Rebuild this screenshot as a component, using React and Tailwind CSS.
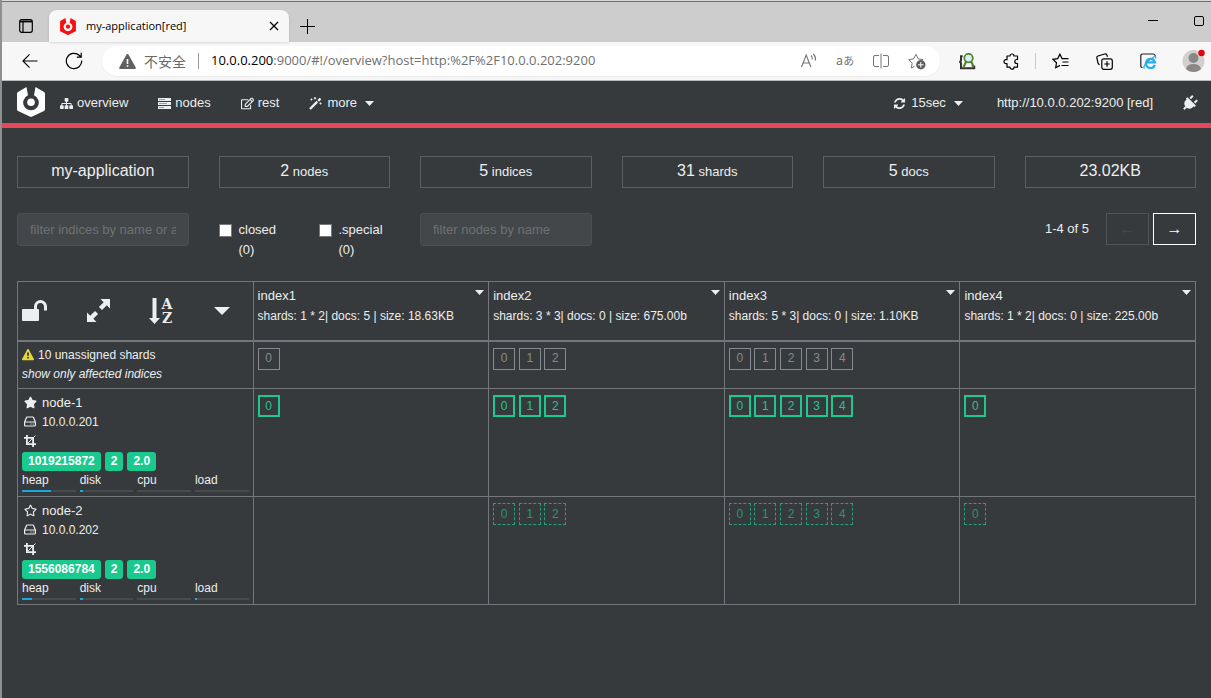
import React from "react";
import { FaPlug, FaStar, FaRegStar, FaRegEdit } from "react-icons/fa";

const INDICES = [
  { name: "index1", info: "shards: 1 * 2| docs: 5 | size: 18.63KB", shards: [["0"], ["0"], []] },
  { name: "index2", info: "shards: 3 * 3| docs: 0 | size: 675.00b", shards: [["0", "1", "2"], ["0", "1", "2"], ["0", "1", "2"]] },
  { name: "index3", info: "shards: 5 * 3| docs: 0 | size: 1.10KB", shards: [["0", "1", "2", "3", "4"], ["0", "1", "2", "3", "4"], ["0", "1", "2", "3", "4"]] },
  { name: "index4", info: "shards: 1 * 2| docs: 0 | size: 225.00b", shards: [[], ["0"], ["0"]] },
];

const NODES = [
  { name: "node-1", ip: "10.0.0.201", tags: ["1019215872", "2", "2.0"], master: true, usage: { heap: 54, disk: 7, cpu: 0, load: 0 } },
  { name: "node-2", ip: "10.0.0.202", tags: ["1556086784", "2", "2.0"], master: false, usage: { heap: 19, disk: 7, cpu: 0, load: 4 } },
];

const STATS = [
  { value: "my-application" },
  { value: "2", unit: "nodes" },
  { value: "5", unit: "indices" },
  { value: "31", unit: "shards" },
  { value: "5", unit: "docs" },
  { value: "23.02KB" },
];

const SHARD_STYLES = [
  "border border-[#868a8e] text-[#868a8e]",
  "border-2 border-[#1ac98e] text-[#1ac98e]",
  "border border-dashed border-[#25a079] text-[#259672]",
];

function Glyph({ d, className }) {
  return (
    <svg viewBox="0 0 1792 1792" fill="currentColor" className={className} aria-hidden="true">
      <path d={d} />
    </svg>
  );
}

const SITEMAP = "M1792 1248v320q0 40-28 68t-68 28h-320q-40 0-68-28t-28-68v-320q0-40 28-68t68-28h96v-192h-512v192h96q40 0 68 28t28 68v320q0 40-28 68t-68 28h-320q-40 0-68-28t-28-68v-320q0-40 28-68t68-28h96v-192h-512v192h96q40 0 68 28t28 68v320q0 40-28 68t-68 28h-320q-40 0-68-28t-28-68v-320q0-40 28-68t68-28h96v-192q0-52 38-90t90-38h512v-192h-96q-40 0-68-28t-28-68v-320q0-40 28-68t68-28h320q40 0 68 28t28 68v320q0 40-28 68t-68 28h-96v192h512q52 0 90 38t38 90v192h96q40 0 68 28t28 68z";
const REFRESH = "M1639 1056q0 5-1 7-64 268-268 434.500t-478 166.500q-146 0-282.500-55t-243.500-157l-129 129q-19 19-45 19t-45-19-19-45v-448q0-26 19-45t45-19h448q26 0 45 19t19 45-19 45l-137 137q71 66 161 102t187 36q134 0 250-65t186-179q11-17 53-117 8-23 30-23h192q13 0 22.500 9.500t9.500 22.500zm25-800v448q0 26-19 45t-45 19h-448q-26 0-45-19t-19-45 19-45l138-138q-148-137-349-137-134 0-250 65t-186 179q-11 17-53 117-8 23-30 23h-199q-13 0-22.500-9.500t-9.500-22.500v-7q65-268 270-434.500t480-166.500q146 0 284 55.500t245 156.500l130-129q19-19 45-19t45 19 19 45z";
const WARNING = "M1024 1375v-190q0-14-9.500-23.500t-22.500-9.500h-192q-13 0-22.500 9.500t-9.500 23.500v190q0 14 9.500 23.500t22.500 9.500h192q13 0 22.500-9.500t9.500-23.500zm-2-374l18-459q0-12-10-19-13-11-24-11h-220q-11 0-24 11-10 7-10 21l17 457q0 10 10 16.500t24 6.500h185q14 0 23.500-6.500t10.500-16.500zm-14-934l768 1408q35 63-2 126-17 29-46.500 46t-63.500 17h-1536q-34 0-63.500-17t-46.500-46q-37-63-2-126l768-1408q17-31 47-49t65-18 65 18 47 49z";

function Logo({ className }) {
  return (
    <svg viewBox="0 0 28 30" className={className} aria-hidden="true">
      <path fill="currentColor" fillRule="evenodd" d="M9.500 0 11 8.300a7.800 7.800 0 1 0 6 0L18.500 0 27 5a2 2 0 0 1 1 1.700v15.600a2 2 0 0 1-1 1.700l-11.800 5.600a2.500 2.500 0 0 1-2.400 0L1 24a2 2 0 0 1-1-1.700V6.700A2 2 0 0 1 1 5Z" />
      <circle cx="14" cy="15.300" r="3.800" fill="currentColor" />
    </svg>
  );
}

function Caret({ className }) {
  return (
    <svg viewBox="0 0 8 4" preserveAspectRatio="none" fill="currentColor" className={className} aria-hidden="true">
      <path d="M0 0h8L4 4Z" />
    </svg>
  );
}

function ToolButton({ label, wide, children }) {
  return (
    <button type="button" aria-label={label} className={`flex h-8 shrink-0 items-center justify-center ${wide ? "w-11" : "w-9"}`}>
      {children}
    </button>
  );
}

function BrowserChrome() {
  return (
    <header className="font-['Open_Sans','Noto_Sans_CJK_SC',sans-serif] text-black">
      <div className="h-0.5 border-b border-[#6b706f] bg-[#d9dbda]" />
      <div className="flex h-10 items-end bg-[#cdcdcd]">
        <button type="button" aria-label="Tab actions" className="flex h-8 w-[47px] items-center justify-center">
          <svg width="14" height="14" viewBox="0 0 14 14" fill="none" stroke="currentColor" strokeWidth="1.200">
            <rect x=".7" y=".7" width="12.600" height="12.600" rx="2" />
            <path d="M1 2.500h12" strokeWidth="1.800" />
            <path d="M4 3v10" />
          </svg>
        </button>
        <div className="flex h-8 w-60 items-center rounded-t-lg bg-[#f7f7f7] pr-[10px] pl-[11px] shadow-sm">
          <Logo className="h-[17px] w-4 text-[#f80f0f]" />
          <span className="ml-[10px] flex-1 text-[11px] whitespace-nowrap">my-application[red]</span>
          <button type="button" aria-label="Close tab">
            <svg width="10" height="10" viewBox="0 0 10 10" stroke="currentColor" strokeWidth="1.300"><path d="m1 1 8 8M9 1 1 9" /></svg>
          </button>
        </div>
        <button type="button" aria-label="New tab" className="flex h-8 w-9 items-center justify-center">
          <svg width="15" height="15" viewBox="0 0 15 15" stroke="currentColor"><path d="M7.500 0v15M0 7.500h15" /></svg>
        </button>
        <div className="mb-3 ml-auto flex items-center gap-9 pr-[7px]">
          <button type="button" aria-label="Minimize" className="pb-1">
            <svg width="10" height="10" viewBox="0 0 10 10" stroke="currentColor"><path d="M0 4.500h10" /></svg>
          </button>
          <button type="button" aria-label="Maximize" className="pb-1">
            <svg width="10" height="10" viewBox="0 0 10 10" fill="none" stroke="currentColor"><rect x=".5" y=".5" width="9" height="9" rx="1.500" /></svg>
          </button>
        </div>
      </div>
      <div className="flex h-[39px] items-center border-b border-[#b9bcbb] bg-[#f7f7f7] pl-[6px]">
        <ToolButton label="Back" wide>
          <svg width="16" height="16" viewBox="0 0 17 16" fill="none" stroke="currentColor" strokeWidth="1.200"><path d="M16.500 8H1M8 1 1 8l7 7" /></svg>
        </ToolButton>
        <ToolButton label="Reload" wide>
          <svg width="18" height="18" viewBox="0 0 18 18" fill="none" stroke="currentColor" strokeWidth="1.200"><path d="M16.700 8.500A7.700 7.700 0 1 1 14.200 3.300L16 5M16.200.8V5.200H11.800" /></svg>
        </ToolButton>
        <div className="ml-[6px] flex h-[30px] min-w-0 flex-1 items-center rounded-full bg-white pr-[5px] pl-[17px] shadow-xs">
          <svg width="17" height="15" viewBox="0 0 17 15" aria-hidden="true">
            <path fill="#606060" d="M7.400.7a1.200 1.200 0 0 1 2.200 0l7 12.600a1.100 1.100 0 0 1-1 1.700H1.400a1.100 1.100 0 0 1-1-1.700Z" />
            <path stroke="#fff" strokeWidth="1.600" d="M8.500 5v5M8.500 11.200v1.600" />
          </svg>
          <span className="ml-2 font-['Noto_Sans_CJK_SC',sans-serif] text-sm leading-5 whitespace-nowrap text-[#6a6a6a]">不安全</span>
          <span className="mx-3 h-4 w-px bg-[#9a9a9a]" />
          <span className="min-w-0 flex-1 truncate text-[13px] text-[#707070]">
            <span className="text-black">10.0.0.200</span>:9000/#!/overview?host=http:%2F%2F10.0.0.202:9200
          </span>
          <div className="flex items-center text-[#757575]">
            <ToolButton label="Read aloud">
              <svg width="18" height="16" viewBox="0 0 18 16" fill="none" stroke="currentColor" strokeWidth="1.100"><path d="M1.500 14 6.200 2 10.900 14M3.200 10h6M11 2.500q1.500 1.500 1.200 4M13.300 1q2.600 2.500 2.200 6.500" /></svg>
            </ToolButton>
            <ToolButton label="Translate">
              <span className="pb-0.5 font-['Noto_Sans_CJK_JP',sans-serif] text-[13px]">a<span className="text-[11px]">あ</span></span>
            </ToolButton>
            <ToolButton label="Split screen">
              <svg width="16" height="16" viewBox="0 0 16 16" fill="none" stroke="currentColor"><path d="M6 2.500H2Q.5 2.500.5 4v8q0 1.500 1.500 1.500h4M10 2.500h4q1.500 0 1.500 1.500v8q0 1.500-1.500 1.500h-4M8 .5v15" /></svg>
            </ToolButton>
            <ToolButton label="Add to favorites">
              <svg width="18" height="17" viewBox="0 0 18 17" fill="none" stroke="currentColor">
                <path d="M6.500 13.300 3.300 15l.9-4.900L.7 6.600l4.900-.7L8 1.300l2.300 4.600 4.900.7" />
                <circle cx="12.800" cy="11.800" r="4.700" fill="#5c5c5c" stroke="none" />
                <path stroke="#fff" d="M12.800 9v5.600M10 11.800h5.600" />
              </svg>
            </ToolButton>
          </div>
        </div>
        <div className="ml-[5px] flex items-center">
          <ToolButton label="Extension" wide>
            <svg width="17" height="17" viewBox="0 0 16 16" fill="none">
              <path d="M3.500 3H1.900v4.200l-1 1.200 1 1.200v4.700h12.400v-2.500" stroke="#333" strokeWidth="1.900" />
              <path d="M7 7.500 4.200 13.500M11 8q2.300 2 2 5" stroke="#557f2a" strokeWidth="2" />
              <circle cx="9" cy="4.800" r="4" fill="#d3f0fa" stroke="#557f2a" strokeWidth="1.600" />
            </svg>
          </ToolButton>
          <ToolButton label="Extensions" wide>
            <svg width="17" height="17" viewBox="0 0 17 17" fill="none" stroke="currentColor" strokeWidth="1.200" strokeLinejoin="round">
              <path d="M4 3h3a2 2 0 0 1 4 0h3.500v3.500h-.7a2 2 0 0 0 0 4h.7v3.700H11a2 2 0 0 1-4 0H4v-3.500H3a2 2 0 0 1 0-4h1Z" />
            </svg>
          </ToolButton>
          <span className="mx-[2px] h-4 w-px bg-[#c8c8c8]" />
          <ToolButton label="Favorites" wide>
            <svg width="17" height="16" viewBox="0 0 17 16" fill="none" stroke="currentColor" strokeWidth="1.200">
              <path d="M8 12.400 3.700 14.700l.8-4.900L1 6.300l4.700-.7L7.900 1.200 10 5.600h6.500M10.500 9h6M9.500 12.500h7" />
            </svg>
          </ToolButton>
          <ToolButton label="Collections" wide>
            <svg width="17" height="17" viewBox="0 0 17 17" fill="none" stroke="currentColor" strokeWidth="1.200">
              <path d="M3.600 11.700Q2.300 11.200 2 10L.9 5.200Q.5 3.500 2 3L8.700 1q1.600-.4 2.200 1l.6 1.700" />
              <rect x="5.800" y="5.800" width="10.500" height="10.500" rx="2" />
              <path d="M11 8.300v5.400M8.300 11h5.400" />
            </svg>
          </ToolButton>
          <ToolButton label="Internet Explorer mode" wide>
            <svg width="17" height="16" viewBox="0 0 17 16" fill="none">
              <path d="M2.500 14.500Q.8 14.500.8 13V3q0-2 2-2h10.500q1.800 0 2 2" stroke="#222" strokeWidth="1.200" />
              <path d="M14.900 11.800A4.600 4.600 0 1 1 15 9.400H6.500" stroke="#27aee9" strokeWidth="2.300" />
              <path d="M4.500 15.500q-2-1 2-5.500T14.500 3.500q1.700 0 1 2" stroke="#27aee9" strokeWidth="1.300" />
            </svg>
          </ToolButton>
          <button type="button" aria-label="Profile" className="ml-[5px] flex w-9 items-center justify-center">
            <svg width="24" height="24" viewBox="0 0 24 24">
              <circle cx="12.500" cy="12" r="11" fill="#d2d0ce" />
              <circle cx="12.500" cy="9" r="5" fill="#8a8886" />
              <path d="M5 20q1-5 7.500-5t7.500 5q-3 3-7.500 3T5 20Z" fill="#8a8886" />
              <circle cx="20.500" cy="4" r="3.200" fill="#e3000b" />
            </svg>
          </button>
        </div>
      </div>
    </header>
  );
}

function NavBar() {
  return (
    <nav className="flex h-[47px] items-center border-b-[5px] border-[#e64759] px-[15px] text-[13px] whitespace-nowrap">
      <a href="#overview" aria-label="Home"><Logo className="h-[30px] w-7 text-white" /></a>
      <div className="ml-[15px] flex items-center gap-[30px] pt-0.5">
        <a href="#overview" className="flex items-center gap-1">
          <Glyph d={SITEMAP} className="size-[13px]" />overview
        </a>
        <a href="#nodes" className="flex items-center gap-1">
          <svg width="13" height="11" viewBox="0 0 13 11" aria-hidden="true">
            <path fill="currentColor" d="M0 0h13v3H0zM0 4h13v3H0zM0 8h13v3H0z" />
            <path stroke="#9b9ea0" d="M1 1.500h6M1 5.500h8M1 9.500h5" />
          </svg>
          nodes
        </a>
        <a href="#rest" className="flex items-center gap-1">
          <FaRegEdit className="size-[13px]" />rest
        </a>
        <button type="button" className="flex items-center gap-[5px]">
          <svg width="13" height="13" viewBox="0 0 13 13" fill="none" stroke="currentColor" aria-hidden="true">
            <path strokeWidth="2.400" d="M1 12 8.300 4.700" />
            <path strokeWidth="2.400" d="M9.200 3.800 11.500 1.500" />
            <path d="M2.500 1.500v2M1.500 2.500h2M6 0v2.400M4.800 1.200h2.400M11.500 5.500v2M10.500 6.500h2" />
          </svg>
          more
          <Caret className="ml-[3px] h-[5px] w-[9px]" />
        </button>
      </div>
      <div className="ml-auto flex items-center gap-[30px] pt-0.5">
        <button type="button" className="flex items-center gap-[5px]">
          <Glyph d={REFRESH} className="size-[13px]" />
          15sec
          <Caret className="mr-1 ml-[3px] h-[5px] w-[9px]" />
        </button>
        <a href="#connect">http://10.0.0.202:9200 [red]</a>
        <button type="button" aria-label="Disconnect"><FaPlug className="size-[13px] scale-125 rotate-45" /></button>
      </div>
    </nav>
  );
}

function Check({ label }) {
  return (
    <label className="flex w-[100px] shrink-0 gap-[7px]">
      <input type="checkbox" className="mt-1 size-[13px] shrink-0 appearance-none border border-[#767676] bg-white checked:bg-[#1ac98e]" />
      <span className="leading-5">{label}<br />(0)</span>
    </label>
  );
}

function Filters() {
  const field = "h-[33px] w-full min-w-0 rounded-[3px] border border-[#4b4f52] bg-[#434749] px-3 text-[13px] placeholder:text-[#6d7174] outline-none";
  return (
    <form className="mt-[25px] grid grid-cols-6 gap-[30px]" onSubmit={(e) => e.preventDefault()}>
      <input type="text" aria-label="Filter indices" placeholder="filter indices by name or aliases" className={field} />
      <div className="flex pt-[7px]">
        <Check label="closed" />
        <Check label=".special" />
      </div>
      <input type="text" aria-label="Filter nodes" placeholder="filter nodes by name" className={field} />
      <div className="col-span-3 flex h-8 items-center justify-end">
        <span className="mr-[17px] text-[13px]">1-4 of 5</span>
        <button type="button" disabled aria-label="Previous page" className="mr-1 h-8 w-[43px] border border-[#515558] text-base text-[#45494c]">←</button>
        <button type="button" aria-label="Next page" className="h-8 w-[43px] border border-white text-base text-white">→</button>
      </div>
    </form>
  );
}

function TableTools() {
  return (
    <div className="flex items-center justify-between pr-[19px]">
      <button type="button" aria-label="Toggle lock">
        <svg width="25" height="22" viewBox="0 0 25 22" aria-hidden="true">
          <rect y="9" width="17" height="12" rx="1" fill="currentColor" />
          <path d="M13.500 10V6.500a5 5 0 0 1 10 0V10.500" fill="none" stroke="currentColor" strokeWidth="3" />
        </svg>
      </button>
      <button type="button" aria-label="Expand">
        <svg width="23" height="23" viewBox="0 0 23 23" fill="currentColor" aria-hidden="true">
          <path d="M13.500 0H23v9.500l-3.200-3.200-4.800 4.800-3.100-3.100 4.800-4.800ZM0 13.500l3.200 3.200L8 11.900l3.100 3.100-4.800 4.800L9.500 23H0Z" />
        </svg>
      </button>
      <button type="button" aria-label="Sort by name">
        <svg width="25" height="32" viewBox="0 0 25 32" fill="currentColor" aria-hidden="true">
          <path d="M3.500 3h4v20H11l-5.500 6L0 23h3.500Z" />
          <text x="18" y="14" textAnchor="middle" className="font-['DejaVu_Serif',serif] text-sm font-bold">A</text>
          <text x="18" y="28" textAnchor="middle" className="font-['DejaVu_Serif',serif] text-sm font-bold">Z</text>
        </svg>
      </button>
      <button type="button" aria-label="More actions"><Caret className="h-2 w-4" /></button>
    </div>
  );
}

function Shards({ ids, kind }) {
  return ids.map((id) => (
    <React.Fragment key={id}>
      <button type="button" className={`inline-flex size-[22px] items-center justify-center pb-px align-top text-xs ${SHARD_STYLES[kind]}`}>{id}</button>{" "}
    </React.Fragment>
  ));
}

function NodeCell({ node }) {
  const Star = node.master ? FaStar : FaRegStar;
  return (
    <div className="text-xs">
      <div className="flex h-[19px] items-center gap-[5px] pl-0.5 text-[13px]"><Star className="size-[13px]" />{node.name}</div>
      <div className="flex h-[19px] items-center gap-[6px] pl-0.5">
        <svg width="12" height="11" viewBox="0 0 12 11" fill="none" stroke="currentColor" strokeWidth="1.200" aria-hidden="true">
          <path d="M.6 6 2.500 1.500Q2.700 1 3.200 1h5.600q.5 0 .7.500L11.400 6v3q0 1-1 1H1.600q-1 0-1-1ZM.6 6h10.800M6.500 8h1M8.700 8h1" />
        </svg>
        {node.ip}
      </div>
      <div className="flex h-5 items-center pl-0.5">
        <svg width="12" height="12" viewBox="0 0 12 12" fill="none" stroke="currentColor" strokeWidth="1.800" aria-hidden="true">
          <path d="M0 2.900h9.100V12M2.900 0v9.100H12" />
          <path strokeWidth="1" d="M3.500 8.500 11.500.500" />
        </svg>
      </div>
      <div className="flex h-5 items-center gap-1 font-bold text-white">
        {node.tags.map((tag) => (
          <span key={tag} className="rounded-[3px] bg-[#1ac98e] px-[6px] leading-[19px]">{tag}</span>
        ))}
      </div>
      <div className="grid grid-cols-4 gap-1">
        {Object.entries(node.usage).map(([key, value]) => (
          <div key={key}>
            <div className="leading-[19px]">{key}</div>
            <div className="h-0.5 bg-[#484b4d]"><div className="h-full bg-[#1ca8dd]" style={{ width: `${value}%` }} /></div>
          </div>
        ))}
      </div>
    </div>
  );
}

function ClusterTable() {
  const cell = "border border-[#73777b] p-1 text-left align-top font-normal";
  const shardCell = `${cell} pt-[6px]`;
  return (
    <table className="mt-[21px] w-full table-fixed border-collapse">
      <thead>
        <tr className="h-[59px]">
          <th className="border border-b-2 border-[#73777b] p-1 align-middle font-normal"><TableTools /></th>
          {INDICES.map((index) => (
            <th key={index.name} className="border border-b-2 border-[#73777b] p-1 text-left align-top font-normal">
              <div className="flex justify-between leading-5">
                {index.name}
                <button type="button" aria-label={`${index.name} actions`} className="flex h-[13px] items-center"><Caret className="h-[5px] w-[9px]" /></button>
              </div>
              <div className="text-xs leading-5 whitespace-nowrap">{index.info}</div>
            </th>
          ))}
        </tr>
      </thead>
      <tbody>
        <tr className="h-12">
          <td className={cell}>
            <div className="flex items-center gap-1 text-xs leading-[19px]"><Glyph d={WARNING} className="size-3 text-[#e4d836]" />10 unassigned shards</div>
            <button type="button" className="block text-xs leading-[19px] italic">show only affected indices</button>
          </td>
          {INDICES.map((index) => <td key={index.name} className={shardCell}><Shards ids={index.shards[0]} kind={0} /></td>)}
        </tr>
        {NODES.map((node, i) => (
          <tr key={node.name} className="h-[108px]">
            <td className={cell}><NodeCell node={node} /></td>
            {INDICES.map((index) => <td key={index.name} className={shardCell}><Shards ids={index.shards[i + 1]} kind={i + 1} /></td>)}
          </tr>
        ))}
      </tbody>
    </table>
  );
}

export default function App() {
  return (
    <div className="min-h-screen border-l-2 border-[#8d908f] bg-[#373a3c] font-['Liberation_Sans',Arial,sans-serif] text-[13px] text-[#eceeef]">
      <BrowserChrome />
      <NavBar />
      <main className="px-[15px] pt-7 pb-10">
        <section className="grid grid-cols-6 gap-[30px]">
          {STATS.map((stat) => (
            <div key={stat.value + (stat.unit || "")} className="h-8 border border-[#5b5f62] text-center text-base leading-[28px]">
              {stat.value}{stat.unit && <span className="text-[13px]"> {stat.unit}</span>}
            </div>
          ))}
        </section>
        <Filters />
        <ClusterTable />
      </main>
    </div>
  );
}
